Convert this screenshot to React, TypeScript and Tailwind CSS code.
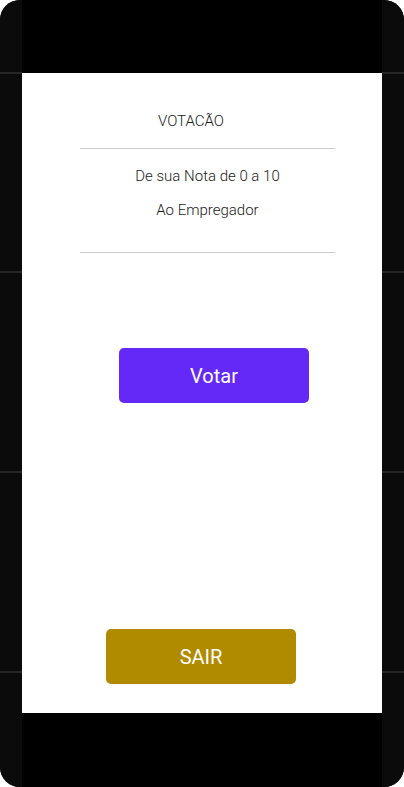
import React from "react";

function SideRail() {
  return (
    <div className="flex w-[22px] flex-col bg-[#0b0b0b]">
      <div className="mt-[72px] h-[2px] bg-[#262626]" />
      <div className="mt-[197px] h-[2px] bg-[#262626]" />
      <div className="mt-[198px] h-[2px] bg-[#262626]" />
      <div className="mt-[198px] h-[2px] bg-[#262626]" />
    </div>
  );
}

export default function App() {
  return (
    <div className="h-[787px] w-[404px] bg-white" style={{ fontFamily: "Roboto, 'Noto Sans', sans-serif" }}>
      <div className="flex h-full w-full overflow-hidden rounded-[20px] bg-[#0b0b0b]">
        <SideRail />
        <div className="flex w-[360px] flex-col bg-black">
          <div className="h-[73px]" />
          <div className="flex h-[640px] flex-col bg-white">
            <div className="ml-[136px] mt-[39px] text-[15px] font-light leading-[18px] text-[#1a1a1a]">VOTACÃO</div>
            <div className="ml-[58px] mt-[18px] h-px w-[255px] bg-[#cccccc]" />
            <div className="ml-[58px] mt-[18px] w-[255px] text-center text-[15px] font-light leading-[18px] text-[#1a1a1a]">
              De sua Nota de 0 a 10
            </div>
            <div className="ml-[58px] mt-[16px] w-[255px] text-center text-[15px] font-light leading-[18px] text-[#1a1a1a]">
              Ao Empregador
            </div>
            <div className="ml-[58px] mt-[33px] h-px w-[255px] bg-[#cccccc]" />
            <button className="ml-[97px] mt-[95px] flex h-[55px] w-[190px] items-center justify-center rounded-[5px] bg-[#6429f6] text-[20px] text-white">
              Votar
            </button>
            <button className="ml-[84px] mt-[226px] flex h-[55px] w-[190px] items-center justify-center rounded-[5px] bg-[#b08b00] text-[20px] text-white">
              SAIR
            </button>
          </div>
          <div className="flex-1" />
        </div>
        <SideRail />
      </div>
    </div>
  );
}
